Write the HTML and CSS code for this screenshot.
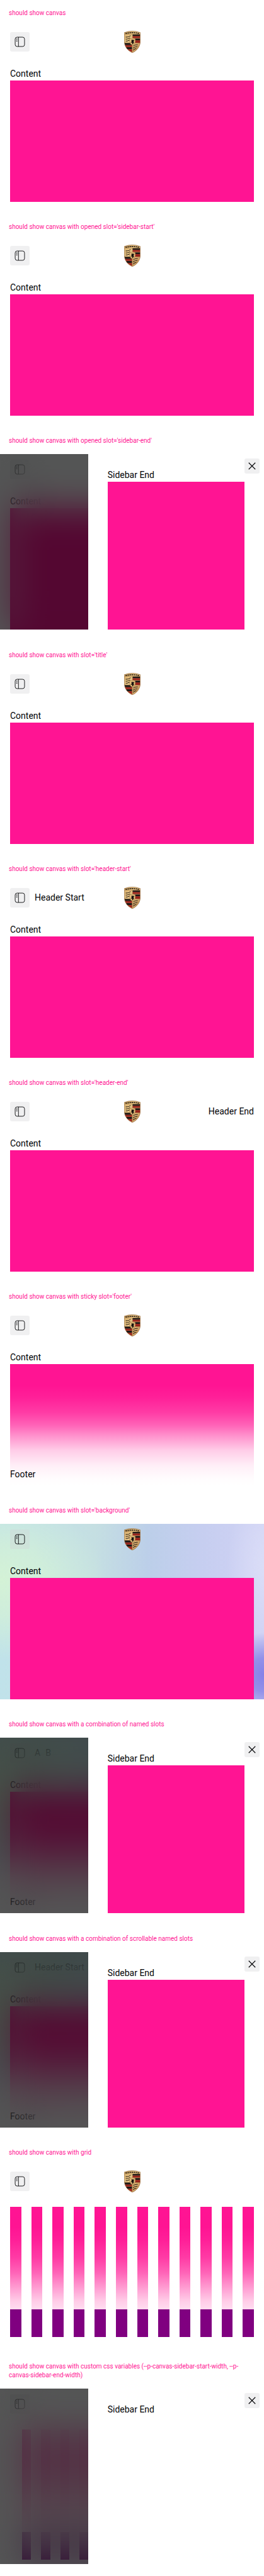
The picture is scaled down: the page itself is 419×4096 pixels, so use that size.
FILE: index.html
```html
<!DOCTYPE html>
<html lang="en">
<head>
<meta charset="utf-8">
<meta name="viewport" content="width=device-width, initial-scale=1">
<title>Canvas overview</title>
<link rel="stylesheet" href="styles.css">
</head>
<body>
<svg class="sprite" aria-hidden="true">
  <defs>
    <linearGradient id="gold" x1="0" y1="0" x2="1" y2="1">
      <stop offset="0" stop-color="#d0a562"/><stop offset=".4" stop-color="#ecca8c"/><stop offset="1" stop-color="#b9854a"/>
    </linearGradient>
    <clipPath id="shield"><path d="M.4 3Q15-2.4 29.6 3V19C29.6 29 23 36.500 15 40 7 36.500.4 29 .4 19Z"/></clipPath>
  </defs>
  <symbol id="icon-sidebar" viewBox="0 0 24 24">
    <rect x="3.500" y="3.500" width="17" height="17" rx="3.500" fill="none" stroke="currentColor"/>
    <path d="M9.500 3.500v17M5.500 6.500h2M5.500 8.700h2M5.500 10.900h2" fill="none" stroke="currentColor"/>
  </symbol>
  <symbol id="icon-close" viewBox="0 0 24 24">
    <path d="M5 5l14 14M19 5L5 19" fill="none" stroke="currentColor" stroke-width="1.500"/>
  </symbol>
  <symbol id="crest" viewBox="0 0 30 40">
    <g clip-path="url(#shield)">
      <path fill="url(#gold)" d="M0-1h30v42H0z"/>
      <path fill="#1d1716" d="M15.500 6.500H29.500v3H15.500zM15.500 13.800H29.500v3.500H15.500zM.8 22h13.700v4H.8zM3 29.800h11.500v3.700H3z"/>
      <path fill="#98201b" d="M15.500 9.500H29.500V13H15.500zM15.500 17.500H29.500V22H15.500zM.8 26h13.700v3.500H.8zM5 33.700h9.500V39z"/>
      <path fill="none" stroke="#2b2118" stroke-width="1.200" d="M3 11.200q5 .8 9-2.500M3 15q4 .5 8-2.300M3 18.800q4 0 7-2M17 28q1.500-3 8-2.500M16.500 32q2-3 8-3M16.500 35.500q2-3 6-3.200"/>
      <path fill="none" stroke="#8e6b38" stroke-width=".5" d="M15 6.500V38M1 22h28M1 6.200h28"/>
      <path fill="#e2bb7a" stroke="#7a5628" stroke-width=".5" d="M10 14.500q5-2 10.500 0v5.500q-.6 4.500-5.200 6.300Q10.600 24.500 10 20z"/>
      <path fill="#17120f" d="M13.200 17.500l1.500-1.800 1.300 1 1.800-.4.600 1.500-1.200 1.300.8 2-1.800 3-1.800.600.500-2.300-1.300-1.200-1.600.700.600-1.600 1.400-.900z"/>
      <path fill="none" stroke="#3a2a19" stroke-width="2.200" stroke-dasharray="2.600 1.100" d="M2.500 4.600Q15 2 27.500 4.600"/>
    </g>
    <path fill="none" stroke="#94693a" stroke-width=".8" d="M.4 3Q15-2.400 29.600 3V19C29.600 29 23 36.500 15 40 7 36.500.4 29 .4 19Z"/>
  </symbol>
</svg>

<section class="case">
  <h2 class="case__title">should show canvas</h2>
  <div class="canvas">
    <header class="canvas__header">
      <div class="canvas__start"><button class="btn" type="button" aria-label="Open sidebar"><svg class="btn__icon"><use href="#icon-sidebar"/></svg></button></div>
      <svg class="crest" role="img" aria-label="Porsche"><use href="#crest"/></svg>
    </header>
    <div class="canvas__main">Content<div class="fill"></div></div>
  </div>
</section>

<section class="case">
  <h2 class="case__title">should show canvas with opened slot='sidebar-start'</h2>
  <div class="canvas">
    <header class="canvas__header">
      <div class="canvas__start"><button class="btn" type="button" aria-label="Open sidebar"><svg class="btn__icon"><use href="#icon-sidebar"/></svg></button></div>
      <svg class="crest" role="img" aria-label="Porsche"><use href="#crest"/></svg>
    </header>
    <div class="canvas__main">Content<div class="fill"></div></div>
  </div>
</section>

<section class="case">
  <h2 class="case__title">should show canvas with opened slot='sidebar-end'</h2>
  <div class="canvas">
    <header class="canvas__header">
      <div class="canvas__start"><button class="btn" type="button" aria-label="Open sidebar"><svg class="btn__icon"><use href="#icon-sidebar"/></svg></button></div>
    </header>
    <div class="canvas__main">Content<div class="fill"></div></div>
    <div class="scrim"></div>
    <aside class="sidebar">Sidebar End<div class="fill"></div>
      <button class="btn btn--close" type="button" aria-label="Close sidebar"><svg class="btn__icon"><use href="#icon-close"/></svg></button>
    </aside>
  </div>
</section>

<section class="case">
  <h2 class="case__title">should show canvas with slot='title'</h2>
  <div class="canvas">
    <header class="canvas__header">
      <div class="canvas__start"><button class="btn" type="button" aria-label="Open sidebar"><svg class="btn__icon"><use href="#icon-sidebar"/></svg></button></div>
      <svg class="crest" role="img" aria-label="Porsche"><use href="#crest"/></svg>
    </header>
    <div class="canvas__main">Content<div class="fill"></div></div>
  </div>
</section>

<section class="case">
  <h2 class="case__title">should show canvas with slot='header-start'</h2>
  <div class="canvas">
    <header class="canvas__header">
      <div class="canvas__start"><button class="btn" type="button" aria-label="Open sidebar"><svg class="btn__icon"><use href="#icon-sidebar"/></svg></button><span>Header Start</span></div>
      <svg class="crest" role="img" aria-label="Porsche"><use href="#crest"/></svg>
    </header>
    <div class="canvas__main">Content<div class="fill"></div></div>
  </div>
</section>

<section class="case">
  <h2 class="case__title">should show canvas with slot='header-end'</h2>
  <div class="canvas">
    <header class="canvas__header">
      <div class="canvas__start"><button class="btn" type="button" aria-label="Open sidebar"><svg class="btn__icon"><use href="#icon-sidebar"/></svg></button></div>
      <svg class="crest" role="img" aria-label="Porsche"><use href="#crest"/></svg>
      <div class="canvas__end">Header End</div>
    </header>
    <div class="canvas__main">Content<div class="fill"></div></div>
  </div>
</section>

<section class="case">
  <h2 class="case__title">should show canvas with sticky slot='footer'</h2>
  <div class="canvas">
    <header class="canvas__header">
      <div class="canvas__start"><button class="btn" type="button" aria-label="Open sidebar"><svg class="btn__icon"><use href="#icon-sidebar"/></svg></button></div>
      <svg class="crest" role="img" aria-label="Porsche"><use href="#crest"/></svg>
    </header>
    <div class="canvas__main">Content<div class="fill"></div></div>
    <footer class="canvas__footer">Footer</footer>
  </div>
</section>

<section class="case">
  <h2 class="case__title">should show canvas with slot='background'</h2>
  <div class="canvas canvas--aurora">
    <header class="canvas__header">
      <div class="canvas__start"><button class="btn" type="button" aria-label="Open sidebar"><svg class="btn__icon"><use href="#icon-sidebar"/></svg></button></div>
      <svg class="crest" role="img" aria-label="Porsche"><use href="#crest"/></svg>
    </header>
    <div class="canvas__main">Content<div class="fill"></div></div>
  </div>
</section>

<section class="case">
  <h2 class="case__title">should show canvas with a combination of named slots</h2>
  <div class="canvas canvas--aurora">
    <header class="canvas__header">
      <div class="canvas__start"><button class="btn" type="button" aria-label="Open sidebar"><svg class="btn__icon"><use href="#icon-sidebar"/></svg></button><span>A</span><span>B</span></div>
    </header>
    <div class="canvas__main">Content<div class="fill"></div></div>
    <footer class="canvas__footer">Footer</footer>
    <div class="scrim"></div>
    <aside class="sidebar">Sidebar End<div class="fill"></div>
      <button class="btn btn--close" type="button" aria-label="Close sidebar"><svg class="btn__icon"><use href="#icon-close"/></svg></button>
    </aside>
  </div>
</section>

<section class="case">
  <h2 class="case__title">should show canvas with a combination of scrollable named slots</h2>
  <div class="canvas canvas--aurora">
    <header class="canvas__header">
      <div class="canvas__start"><button class="btn" type="button" aria-label="Open sidebar"><svg class="btn__icon"><use href="#icon-sidebar"/></svg></button><span>Header Start</span></div>
    </header>
    <div class="canvas__main">Content<div class="fill"></div></div>
    <footer class="canvas__footer">Footer</footer>
    <div class="scrim"></div>
    <aside class="sidebar">Sidebar End<div class="fill"></div>
      <button class="btn btn--close" type="button" aria-label="Close sidebar"><svg class="btn__icon"><use href="#icon-close"/></svg></button>
    </aside>
  </div>
</section>

<section class="case">
  <h2 class="case__title">should show canvas with grid</h2>
  <div class="canvas">
    <header class="canvas__header">
      <div class="canvas__start"><button class="btn" type="button" aria-label="Open sidebar"><svg class="btn__icon"><use href="#icon-sidebar"/></svg></button></div>
      <svg class="crest" role="img" aria-label="Porsche"><use href="#crest"/></svg>
    </header>
    <div class="canvas__main cols"><i></i><i></i><i></i><i></i><i></i><i></i><i></i><i></i><i></i><i></i><i></i><i></i></div>
    <footer class="canvas__footer cols cols--footer"><i></i><i></i><i></i><i></i><i></i><i></i><i></i><i></i><i></i><i></i><i></i><i></i></footer>
  </div>
</section>

<section class="case">
  <h2 class="case__title">should show canvas with custom css variables (--p-canvas-sidebar-start-width, --p-canvas-sidebar-end-width)</h2>
  <div class="canvas canvas--inset">
    <header class="canvas__header">
      <div class="canvas__start"><button class="btn" type="button" aria-label="Open sidebar"><svg class="btn__icon"><use href="#icon-sidebar"/></svg></button></div>
    </header>
    <div class="canvas__main cols"><i></i><i></i><i></i><i></i><i></i><i></i><i></i><i></i><i></i><i></i><i></i><i></i></div>
    <footer class="canvas__footer cols cols--footer"><i></i><i></i><i></i><i></i><i></i><i></i><i></i><i></i><i></i><i></i><i></i><i></i></footer>
    <div class="scrim"></div>
    <aside class="sidebar">Sidebar End
      <button class="btn btn--close" type="button" aria-label="Close sidebar"><svg class="btn__icon"><use href="#icon-close"/></svg></button>
    </aside>
  </div>
</section>
</body>
</html>
```
FILE: styles.css
```css
* { box-sizing: border-box; }

body {
  margin: 0;
  min-height: 100vh;
  display: flex;
  flex-direction: column;
  justify-content: space-between;
  background: #fff;
  color: #010205;
  font-family: Roboto, "Liberation Sans", sans-serif;
  font-size: 14px;
  line-height: 21px;
}

.sprite { position: absolute; width: 0; height: 0; }

.case { padding-bottom: 19px; }

.case__title {
  margin: 0;
  padding: 14px;
  color: #ff1493;
  font-size: 10px;
  font-weight: 400;
  line-height: 14px;
}

.canvas {
  --gutter: 16px;
  position: relative;
  display: flex;
  flex-direction: column;
  height: 279px;
  overflow: hidden;
}

.canvas--inset { --gutter: 35px; }

.canvas--aurora {
  background:
    radial-gradient(ellipse 14% 24% at 100% 86%, #8481e8 0, #8c8ae8e6 40%, #a9a8ec00 100%),
    radial-gradient(ellipse 16% 45% at 102% 24%, #dcdff8 0, #dcdff800 100%),
    radial-gradient(ellipse 40% 45% at 0 32%, #d4f2d6 0, #d2f0d8cc 45%, #cce8dc00 100%),
    linear-gradient(to right, #c0e2ea 0, #c5dfe2 36%, #bccfe9 56%, #c6cef0 76%, #d0d2f4 100%);
}

.canvas__header {
  display: grid;
  grid-template-columns: 1fr 26px 1fr;
  align-items: center;
  flex: none;
  height: 49px;
  padding: 0 16px;
}

.canvas__start { display: flex; align-items: center; gap: 8px; white-space: nowrap; }
.canvas__end { text-align: right; }

.canvas__main {
  flex: 1;
  display: flex;
  flex-direction: column;
  padding: 16px var(--gutter) 0;
}

.fill { flex: 1; background: #ff1493; }

.canvas__footer {
  position: absolute;
  inset: auto 0 0;
  padding: 131px var(--gutter) 7px;
  background: linear-gradient(
    #fff0 0,
    rgb(255 255 255 / .05) 12%,
    rgb(255 255 255 / .17) 27%,
    rgb(255 255 255 / .34) 40%,
    rgb(255 255 255 / .53) 50%,
    rgb(255 255 255 / .79) 65%,
    rgb(255 255 255 / .93) 80%,
    rgb(255 255 255 / .99) 93%,
    #fff 100%
  );
}

.canvas__main.cols,
.canvas__footer.cols {
  display: grid;
  grid-template-columns: repeat(12, 1fr);
  gap: 16px;
}

.cols > i { background: #ff1493; }
.cols--footer > i { height: 44px; background: purple; }

.crest { width: 26px; height: 35px; }

.btn {
  display: flex;
  align-items: center;
  justify-content: center;
  width: 31px;
  height: 31px;
  padding: 0;
  border: 0;
  border-radius: 3px;
  background: rgb(209 208 213 / .33);
  color: #010205;
}

.btn__icon { width: 21px; height: 21px; }

.btn--close {
  position: absolute;
  top: 7px;
  right: 7px;
  width: 24px;
  height: 24px;
}

.btn--close .btn__icon { width: 18px; height: 18px; }

.scrim,
.scrim::before,
.scrim::after { position: absolute; inset: 0; }

.scrim::before {
  content: "";
  backdrop-filter: blur(28px);
  mask-image: linear-gradient(
    to right,
    rgb(0 0 0 / .7) 4%,
    rgb(0 0 0 / .87) 8%,
    rgb(0 0 0 / .93) 12%,
    rgb(0 0 0 / .96) 18%
  );
}

.scrim::after { content: ""; background: rgb(0 1 2 / .67); }

.sidebar {
  position: absolute;
  inset: 0 0 0 auto;
  display: flex;
  flex-direction: column;
  width: 66.667%;
  padding: 23px 31px 0;
  background: #fff;
}
```
